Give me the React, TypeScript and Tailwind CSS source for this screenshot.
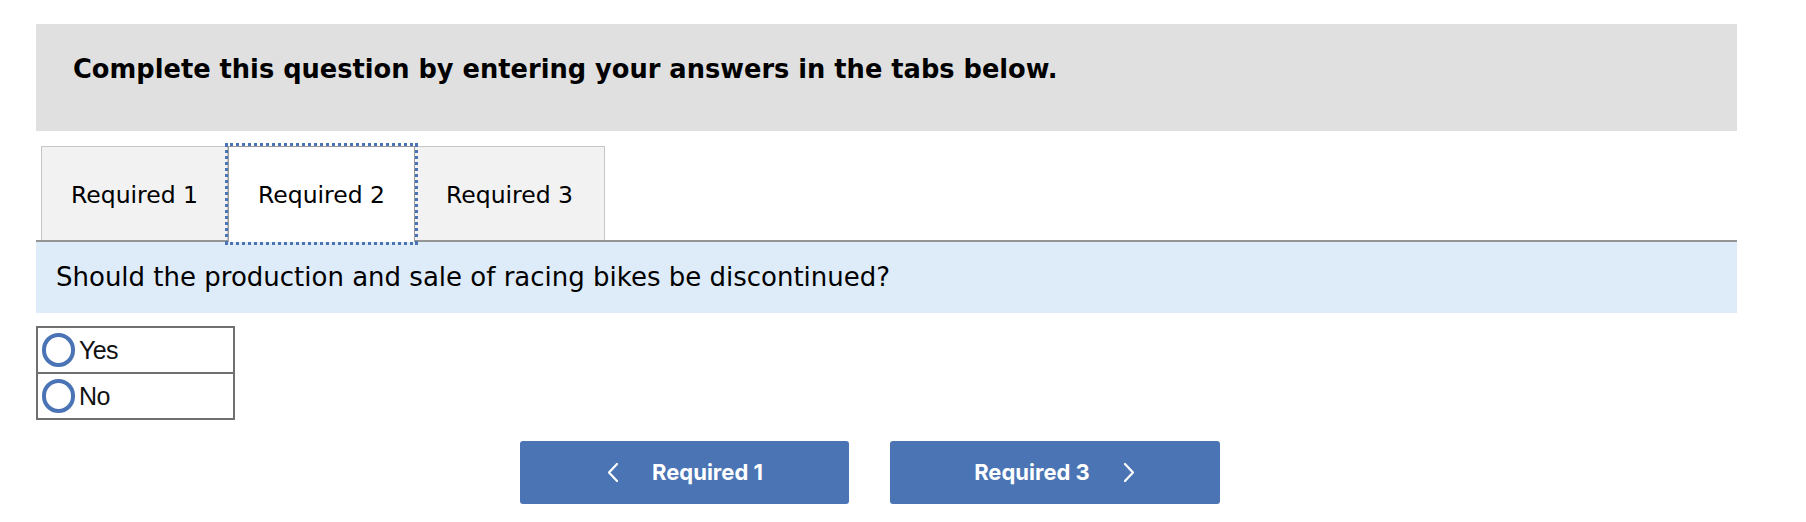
import React from "react";

const verdana = { fontFamily: '"DejaVu Sans", Verdana, sans-serif' };

function Radio({ label }: { label: string }) {
  return (
    <div className="flex h-[44px] items-center pl-[4px]">
      <span className="box-border block h-[34px] w-[33px] rounded-full border-[4px] border-[#4a74b5] bg-white" />
      <span className="ml-[4px] text-[25px] leading-none tracking-[-0.6px] text-[#111]" style={{ fontFamily: '"Liberation Sans", Arial, sans-serif' }}>
        {label}
      </span>
    </div>
  );
}

function Chevron({ dir }: { dir: "left" | "right" }) {
  return (
    <svg width="13" height="21" viewBox="0 0 13 21" fill="none" stroke="white" strokeWidth="2.2" strokeLinecap="round" strokeLinejoin="round">
      {dir === "left" ? <path d="M11 2 L3 10.5 L11 19" /> : <path d="M2 2 L10 10.5 L2 19" />}
    </svg>
  );
}

export default function App() {
  return (
    <div className="min-h-[522px] w-full bg-white pt-[24px]">
      <div className="ml-[36px] w-[1701px]">
        <div className="h-[107px] bg-[#e0e0e0] pl-[37px] pt-[29px]">
          <h1 className="text-[25.7px] font-bold leading-[32px] text-black" style={verdana}>
            Complete this question by entering your answers in the tabs below.
          </h1>
        </div>

        <div className="mt-[15px] flex items-start pl-[5px]" style={verdana}>
          <div className="flex h-[94px] w-[187px] items-center justify-center border border-b-0 border-[#c6c6c6] bg-[#f2f2f2] pt-[4px] text-[23.5px] text-black">
            Required 1
          </div>
          <div className="relative z-10 -mb-[2px] flex h-[96px] w-[187px] items-center justify-center border-x border-t border-[#999] bg-white pt-[2px] text-[23.5px] text-black outline-[3px] outline-offset-[0px] outline-dotted outline-[#4a74b5]">
            Required 2
          </div>
          <div className="flex h-[94px] w-[190px] items-center justify-center border border-b-0 border-l-0 border-[#c6c6c6] bg-[#f2f2f2] pt-[4px] text-[23.5px] text-black">
            Required 3
          </div>
        </div>

        <div className="flex h-[73px] items-center border-t-2 border-[#959595] bg-[#deebf8] pl-[20px]" style={verdana}>
          <p className="text-[26px] text-black">Should the production and sale of racing bikes be discontinued?</p>
        </div>

        <div className="mt-[13px] w-[199px] border-2 border-[#707070]">
          <div className="border-b-2 border-[#707070]">
            <Radio label="Yes" />
          </div>
          <Radio label="No" />
        </div>

        <div className="ml-[484px] mt-[21px] flex gap-[41px]" style={{ fontFamily: 'Inter, Roboto, sans-serif' }}>
          <button className="flex h-[63px] w-[329px] items-center justify-center gap-[33px] rounded-[3px] bg-[#4a74b3] text-[22px] font-bold text-white">
            <Chevron dir="left" />
            <span>Required 1</span>
          </button>
          <button className="flex h-[63px] w-[330px] items-center justify-center gap-[33px] rounded-[3px] bg-[#4a74b3] text-[22px] font-bold text-white">
            <span>Required 3</span>
            <Chevron dir="right" />
          </button>
        </div>
      </div>
    </div>
  );
}
